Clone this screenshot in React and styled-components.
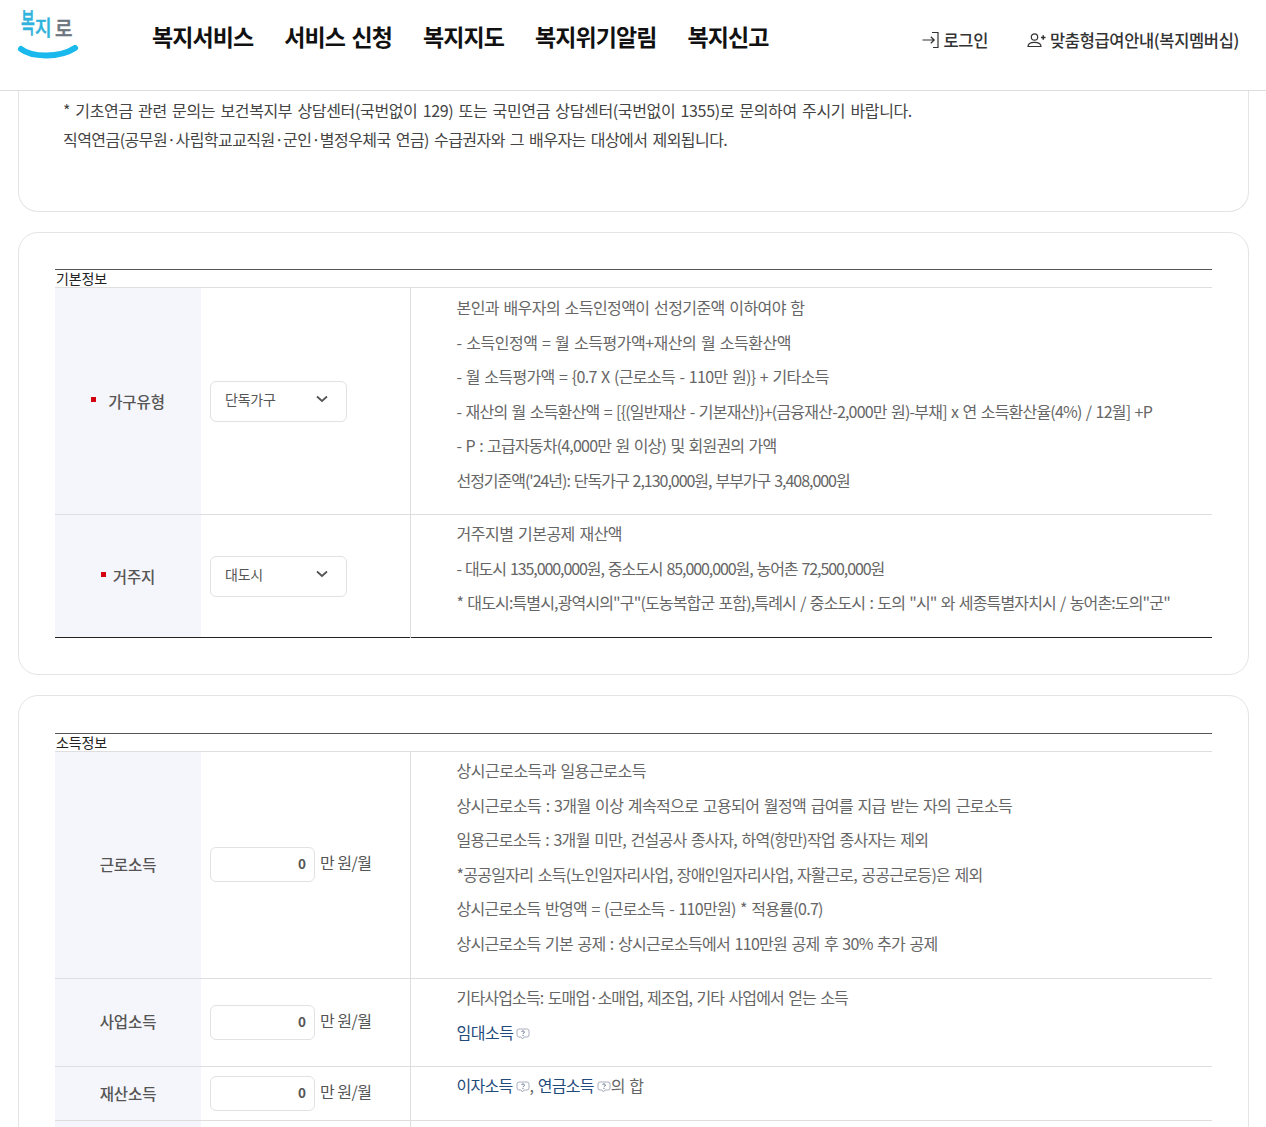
import React from 'react';
import styled, { createGlobalStyle } from 'styled-components';

const Global = createGlobalStyle`
  html, body { margin: 0; padding: 0; background: #fff; overflow: hidden; height: 1127px; }
  * { box-sizing: border-box; }
  body { font-family: "Noto Sans CJK KR", "Noto Sans", sans-serif; color: #555; }
`;

const Page = styled.div`width: 1266px; height: 1127px; overflow: hidden;`;

const Header = styled.header`
  height: 91px;
  border-bottom: 1px solid #dedede;
  display: flex;
  align-items: flex-start;
  background: #fff;
`;
const LogoWrap = styled.a`
  width: 152px;
  padding: 6px 0 0 16px;
  flex: none;
  display: block;
`;
const Nav = styled.nav`
  display: flex;
  gap: 31px;
  padding-top: 19px;
  flex: none;
`;
const NavItem = styled.a`
  font-size: 23px;
  line-height: 34px;
  font-weight: 700;
  color: #111;
  letter-spacing: -0.9px;
  word-spacing: 2px;
  white-space: nowrap;
`;
const Util = styled.div`
  margin-left: auto;
  display: flex;
  gap: 39px;
  padding: 28px 27px 0 0;
`;
const UtilLink = styled.a`
  display: flex;
  align-items: center;
  gap: 4px;
  font-size: 16.5px;
  line-height: 24px;
  font-weight: 500;
  color: #333;
  letter-spacing: -0.35px;
  white-space: nowrap;
`;

const Main = styled.main`
  display: flex;
  flex-direction: column;
  gap: 20px;
  padding: 0 17px 0 18px;
`;
const Card = styled.section`
  border: 1px solid #e4e4e4;
  border-radius: 20px;
  padding: ${p => p.$pt ?? 36}px 36px 36px;
`;
const NoticeCard = styled(Card)`
  border-top: 0;
  border-radius: 0 0 20px 20px;
  height: 121px;
  padding: 5px 36px 0 44px;
`;
const Notice = styled.p`
  margin: 0;
  font-size: 16px;
  line-height: 29px;
  color: #444;
  letter-spacing: ${p => p.$ls}px;
  word-spacing: 2px;
  white-space: nowrap;
`;

const Table = styled.table`
  width: 100%;
  table-layout: fixed;
  border-collapse: collapse;
  border-top: 1px solid #dedede;
  border-bottom: ${p => (p.$open ? '0' : '1px solid #222')};
`;
const Caption = styled.caption`
  caption-side: top;
  text-align: left;
  font-size: 14px;
  line-height: 17px;
  height: 18px;
  padding-left: 1px;
  color: #222;
  border-top: 1px solid #555;
  letter-spacing: -0.1px;
`;
const Row = styled.tr`
  height: ${p => p.$h}px;
  > * { border-bottom: ${p => (p.$last ? '0' : '1px solid #dedede')}; }
`;
const Head = styled.th`
  width: 146px;
  background: #f5f6fb;
  font-size: 15.5px;
  font-weight: 500;
  color: #555;
  text-align: center;
  padding: 0 0 ${p => p.$pb ?? 0}px;
  letter-spacing: -0.1px;
`;
const Req = styled.span`
  display: inline-block;
  width: 5px;
  height: 5px;
  background: #d50010;
  margin-right: ${p => p.$gap}px;
  vertical-align: 6px;
`;
const InputCell = styled.td`
  width: 209px;
  padding: 0 0 ${p => p.$pb ?? 0}px 9px;
  border-right: 1px solid #dedede;
  vertical-align: middle;
`;
const Select = styled.div`
  width: 137px;
  height: 41px;
  border: 1px solid #e2e2e2;
  border-radius: 6px;
  display: flex;
  align-items: center;
  justify-content: space-between;
  padding: 0 18px 4px 14px;
  font-size: 14px;
  color: #555;
  letter-spacing: -0.2px;
`;
const AmountRow = styled.div`
  display: flex;
  align-items: center;
  gap: 5px;
`;
const Amount = styled.div`
  width: 105px;
  height: 35px;
  border: 1px solid #e2e2e2;
  border-radius: 6px;
  display: flex;
  align-items: center;
  justify-content: flex-end;
  padding: 0 8px 4px 0;
  font-size: 13.5px;
  font-weight: 600;
  color: #555;
`;
const Unit = styled.span`
  font-size: 16px;
  color: #555;
  letter-spacing: -0.5px;
  white-space: nowrap;
  position: relative;
  top: -3px;
`;
const DescCell = styled.td`
  padding: ${p => p.$pt ?? 1}px 0 0 46px;
  vertical-align: top;
`;
const Line = styled.p`
  margin: 0;
  font-size: 16px;
  line-height: 34.5px;
  color: #666;
  letter-spacing: ${p => p.$ls ?? -0.5}px;
  word-spacing: 1.5px;
  white-space: nowrap;
`;
const Term = styled.a`color: #1f4a7a;`;
const Help = styled.svg`
  width: 14px;
  height: 12px;
  margin-left: 3px;
  vertical-align: -1px;
`;

const HelpIcon = () => (
  <Help viewBox="0 0 14 12" fill="none">
    <path d="M3 1h8a2 2 0 0 1 2 2v4a2 2 0 0 1-2 2H8l-1.500 2L5 9H3a2 2 0 0 1-2-2V3a2 2 0 0 1 2-2z" stroke="#aab0bd" strokeWidth="1" />
    <path d="M5.600 4a1.400 1.200 0 1 1 2 1.200c-.4.2-.6.5-.6 1" stroke="#5f6c88" strokeWidth="1" />
    <circle cx="7" cy="7.600" r=".6" fill="#5f6c88" />
  </Help>
);

const Chevron = () => (
  <svg width="12" height="8" viewBox="0 0 12 8" fill="none">
    <path d="M1 1.500l5 4.500 5-4.500" stroke="#555" strokeWidth="1.800" />
  </svg>
);

const LoginIcon = () => (
  <svg width="18" height="18" viewBox="0 0 18 18" fill="none" stroke="#333" strokeWidth="1.200">
    <path d="M11 1.500h6v15h-5" />
    <path d="M1.500 9H13M9.800 5.800l3.400 3.200-3.400 3.200" />
  </svg>
);
const MemberIcon = () => (
  <svg width="19" height="18" viewBox="0 0 19 18" fill="none" stroke="#333" strokeWidth="1.200">
    <circle cx="7.500" cy="6" r="3.200" />
    <path d="M1 15.500c0-3 2.900-4.200 6.500-4.200s6.500 1.200 6.500 4.200z" />
    <path d="M14 6.500h4.500M16.250 4.300v4.400" strokeWidth="1.500" />
  </svg>
);

const LogoSvg = styled.svg`overflow: visible;`;
const LogoText = styled.text`
  font-family: "Noto Sans CJK KR", sans-serif;
  font-weight: 500;
  stroke-width: 0.5px;
`;

const Logo = () => (
  <LogoSvg width="66" height="56" viewBox="0 0 66 56" role="img" aria-label="복지로">
    <LogoText transform="translate(5 27) scale(.75 1.350)" fontSize="20" fill="#2fb3dc" stroke="#2fb3dc">복</LogoText>
    <LogoText transform="translate(19 29) scale(.95 1.100)" fontSize="19" fill="#2fb3dc" stroke="#2fb3dc">지</LogoText>
    <LogoText transform="translate(39 30) scale(1 1.100)" fontSize="19" fill="#6d7680" stroke="#6d7680">로</LogoText>
    <path d="M5 43c10 8 38 9.500 54-1" fill="none" stroke="#19b9ee" strokeWidth="6" strokeLinecap="round" />
  </LogoSvg>
);

const nav = ['복지서비스', '서비스 신청', '복지지도', '복지위기알림', '복지신고'];

export default function App() {
  return (
    <Page>
      <Global />
      <Header>
        <LogoWrap><Logo /></LogoWrap>
        <Nav>{nav.map(n => <NavItem key={n}>{n}</NavItem>)}</Nav>
        <Util>
          <UtilLink><LoginIcon />로그인</UtilLink>
          <UtilLink><MemberIcon />맞춤형급여안내(복지멤버십)</UtilLink>
        </Util>
      </Header>
      <Main>
        <NoticeCard>
          <Notice $ls={-0.35}>* 기초연금 관련 문의는 보건복지부 상담센터(국번없이 129) 또는 국민연금 상담센터(국번없이 1355)로 문의하여 주시기 바랍니다.</Notice>
          <Notice $ls={-0.55}>직역연금(공무원·사립학교교직원·군인·별정우체국 연금) 수급권자와 그 배우자는 대상에서 제외됩니다.</Notice>
        </NoticeCard>
        <Card>
          <Table>
            <Caption>기본정보</Caption>
            <tbody>
              <Row $h={227}>
                <Head><Req $gap={12} />가구유형</Head>
                <InputCell><Select>단독가구<Chevron /></Select></InputCell>
                <DescCell $pt={2}>
                  <Line $ls={-0.57}>본인과 배우자의 소득인정액이 선정기준액 이하여야 함</Line>
                  <Line $ls={-0.47}>- 소득인정액 = 월 소득평가액+재산의 월 소득환산액</Line>
                  <Line $ls={-0.66}>- 월 소득평가액 = {'{'}0.7 X (근로소득 - 110만 원){'}'} + 기타소득</Line>
                  <Line $ls={-0.8}>- 재산의 월 소득환산액 = [{'{'}(일반재산 - 기본재산){'}'}+(금융재산-2,000만 원)-부채] x 연 소득환산율(4%) / 12월] +P</Line>
                  <Line $ls={-0.8}>- P : 고급자동차(4,000만 원 이상) 및 회원권의 가액</Line>
                  <Line $ls={-1.04}>선정기준액('24년): 단독가구 2,130,000원, 부부가구 3,408,000원</Line>
                </DescCell>
              </Row>
              <Row $h={123} $last>
                <Head><Req $gap={7} />거주지</Head>
                <InputCell><Select>대도시<Chevron /></Select></InputCell>
                <DescCell>
                  <Line>거주지별 기본공제 재산액</Line>
                  <Line $ls={-1.08}>- 대도시 135,000,000원, 중소도시 85,000,000원, 농어촌 72,500,000원</Line>
                  <Line $ls={-0.86}>* 대도시:특별시,광역시의"구"(도농복합군 포함),특례시 / 중소도시 : 도의 "시" 와 세종특별자치시 / 농어촌:도의"군"</Line>
                </DescCell>
              </Row>
            </tbody>
          </Table>
        </Card>
        <Card $pt={37}>
          <Table $open>
            <Caption>소득정보</Caption>
            <tbody>
              <Row $h={227}>
                <Head $pb={2}>근로소득</Head>
                <InputCell $pb={1}><AmountRow><Amount>0</Amount><Unit>만 원/월</Unit></AmountRow></InputCell>
                <DescCell>
                  <Line>상시근로소득과 일용근로소득</Line>
                  <Line $ls={-0.6}>상시근로소득 : 3개월 이상 계속적으로 고용되어 월정액 급여를 지급 받는 자의 근로소득</Line>
                  <Line $ls={-0.67}>일용근로소득 : 3개월 미만, 건설공사 종사자, 하역(항만)작업 종사자는 제외</Line>
                  <Line $ls={-0.7}>*공공일자리 소득(노인일자리사업, 장애인일자리사업, 자활근로, 공공근로등)은 제외</Line>
                  <Line $ls={-0.7}>상시근로소득 반영액 = (근로소득 - 110만원) * 적용률(0.7)</Line>
                  <Line $ls={-0.7}>상시근로소득 기본 공제 : 상시근로소득에서 110만원 공제 후 30% 추가 공제</Line>
                </DescCell>
              </Row>
              <Row $h={88}>
                <Head $pb={4}>사업소득</Head>
                <InputCell><AmountRow><Amount>0</Amount><Unit>만 원/월</Unit></AmountRow></InputCell>
                <DescCell>
                  <Line $ls={-0.84}>기타사업소득: 도매업·소매업, 제조업, 기타 사업에서 얻는 소득</Line>
                  <Line><Term>임대소득</Term><HelpIcon /></Line>
                </DescCell>
              </Row>
              <Row $h={54}>
                <Head $pb={2}>재산소득</Head>
                <InputCell><AmountRow><Amount>0</Amount><Unit>만 원/월</Unit></AmountRow></InputCell>
                <DescCell>
                  <Line $ls={-0.7}><Term>이자소득</Term><HelpIcon />, <Term>연금소득</Term><HelpIcon />의 합</Line>
                </DescCell>
              </Row>
              <Row $h={60} $last>
                <Head />
                <InputCell />
                <DescCell />
              </Row>
            </tbody>
          </Table>
        </Card>
      </Main>
    </Page>
  );
}
